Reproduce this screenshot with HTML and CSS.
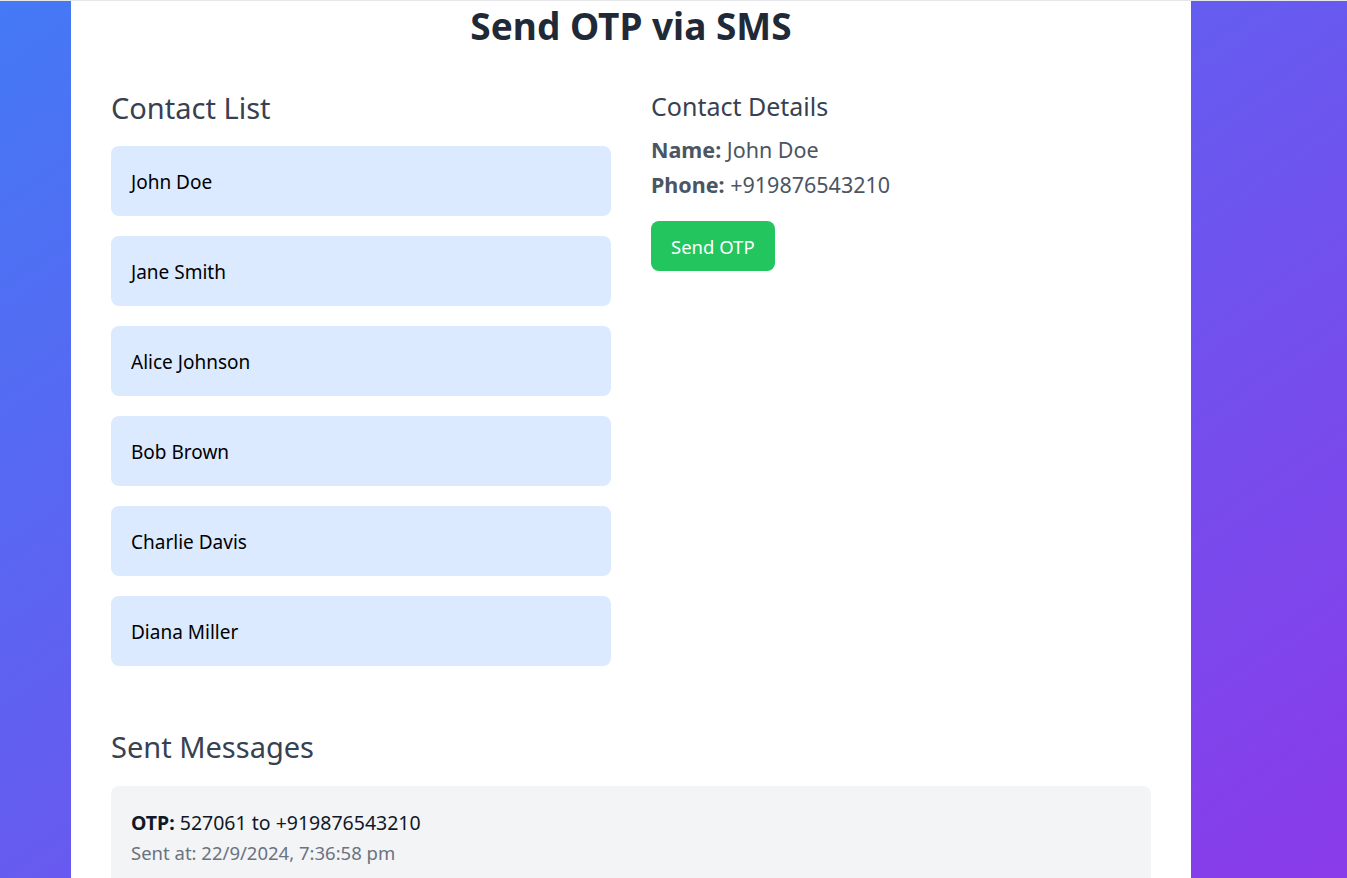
FILE: index.html
```html
<!DOCTYPE html>
<html lang="en">
<head>
<meta charset="utf-8">
<title>Send OTP via SMS</title>
<link rel="stylesheet" href="styles.css">
</head>
<body>
<div class="topline"></div>
<main class="card">
  <h1 class="title">Send OTP via SMS</h1>
  <div class="columns">
    <section class="col">
      <h2 class="heading-lg">Contact List</h2>
      <ul class="contacts">
        <li class="contact">John Doe</li>
        <li class="contact">Jane Smith</li>
        <li class="contact">Alice Johnson</li>
        <li class="contact">Bob Brown</li>
        <li class="contact">Charlie Davis</li>
        <li class="contact">Diana Miller</li>
      </ul>
    </section>
    <section class="col">
      <h2 class="heading-md">Contact Details</h2>
      <p class="detail"><strong>Name:</strong> John Doe</p>
      <p class="detail"><strong>Phone:</strong> +919876543210</p>
      <button class="send-btn">Send OTP</button>
    </section>
  </div>
  <section class="sent">
    <h2 class="heading-lg sent-heading">Sent Messages</h2>
    <div class="message">
      <p class="msg-line"><strong>OTP:</strong> 527061 to +919876543210</p>
      <p class="msg-time">Sent at: 22/9/2024, 7:36:58 pm</p>
    </div>
  </section>
</main>
</body>
</html>
```
FILE: styles.css
```css
html, body {
  margin: 0;
  padding: 0;
}
body {
  min-height: 878px;
  background: linear-gradient(to bottom right, #4479f5, #8c39e9);
  font-family: "Noto Sans", "Segoe UI", sans-serif;
  overflow: hidden;
}
.topline {
  height: 1px;
  background: #e5e7eb;
}
.card {
  width: 1040px;
  margin: 0 0 0 71px;
  background: #ffffff;
  padding: 0 40px 40px;
  min-height: 877px;
}
.title {
  margin: 0;
  padding-top: 5px;
  font-size: 37px;
  line-height: 40px;
  font-weight: 700;
  color: #1f2937;
  text-align: center;
}
.columns {
  display: grid;
  grid-template-columns: 500px 500px;
  column-gap: 40px;
  margin-top: 44px;
}
.heading-lg {
  margin: 0 0 20px;
  font-size: 29px;
  line-height: 36px;
  font-weight: 400;
  color: #374151;
}
.sent-heading {
  margin-bottom: 21px;
}
.heading-md {
  margin: 0 0 10px;
  font-size: 25px;
  line-height: 32px;
  font-weight: 400;
  color: #374151;
}
.contacts {
  list-style: none;
  margin: 0;
  padding: 0;
  display: flex;
  flex-direction: column;
  gap: 20px;
}
.contact {
  background: #dbeafe;
  border-radius: 8px;
  padding: 21px 20px 19px;
  font-size: 19px;
  line-height: 30px;
  color: #000000;
}
.detail {
  margin: 0;
  font-size: 21.5px;
  line-height: 35px;
  color: #4b5563;
}
.detail strong {
  font-weight: 700;
}
.send-btn {
  margin-top: 19px;
  background: #22c55e;
  color: #ffffff;
  border: 0;
  border-radius: 8px;
  padding: 1px 20px 0;
  height: 50px;
  font-family: inherit;
  font-size: 18.5px;
}
.sent {
  margin-top: 63px;
}
.message {
  background: #f3f4f6;
  border-radius: 8px;
  padding: 22px 20px;
}
.msg-line {
  margin: 0;
  font-size: 19.5px;
  line-height: 30px;
  color: #111827;
}
.msg-time {
  margin: 0;
  font-size: 18.5px;
  line-height: 30px;
  color: #6b7280;
}
```
